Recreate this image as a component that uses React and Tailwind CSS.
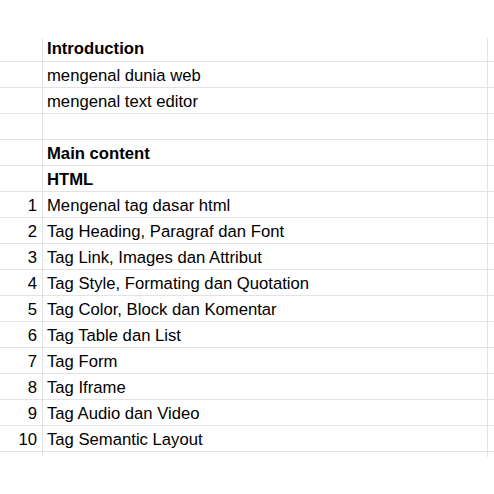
import React from "react";

const rows = [
  { no: "", text: "Introduction", bold: true },
  { no: "", text: "mengenal dunia web" },
  { no: "", text: "mengenal text editor" },
  { no: "", text: "" },
  { no: "", text: "Main content", bold: true },
  { no: "", text: "HTML", bold: true },
  { no: "1", text: "Mengenal tag dasar html" },
  { no: "2", text: "Tag Heading, Paragraf dan Font" },
  { no: "3", text: "Tag Link, Images dan Attribut" },
  { no: "4", text: "Tag Style, Formating dan Quotation" },
  { no: "5", text: "Tag Color, Block dan Komentar" },
  { no: "6", text: "Tag Table dan List" },
  { no: "7", text: "Tag Form" },
  { no: "8", text: "Tag Iframe" },
  { no: "9", text: "Tag Audio dan Video" },
  { no: "10", text: "Tag Semantic Layout" },
];

const App = () => {
  return (
    <div
      className="w-[494px] h-[494px] bg-white text-black text-[16.67px] pt-[38px]"
      style={{ fontFamily: '"Liberation Sans", Arial, sans-serif' }}
    >
      {rows.map((row, i) => (
        <div
          key={i}
          className={`flex border-b border-[#e2e3e3] ${
            i === 0 ? "h-[24px]" : "h-[26px]"
          }`}
        >
          <div className="w-[43px] shrink-0 border-r border-[#e2e3e3] text-right pr-[5px]">
            <div className={`leading-[25px] ${i === 0 ? "-mt-[2px]" : "pt-[1px]"}`}>
              {row.no}
            </div>
          </div>
          <div className="w-[445px] shrink-0 border-r border-[#e2e3e3] pl-1">
            <div
              className={`leading-[25px] whitespace-nowrap ${
                i === 0 ? "-mt-[2px]" : "pt-[1px]"
              } ${row.bold ? "font-bold" : ""}`}
            >
              {row.text}
            </div>
          </div>
          <div className="flex-1" />
        </div>
      ))}
      {/* sisa baris terpotong */}
      <div className="flex h-[5px]">
        <div className="w-[43px] shrink-0 border-r border-[#e2e3e3]" />
        <div className="w-[445px] shrink-0 border-r border-[#e2e3e3]" />
      </div>
    </div>
  );
};

export default App;
